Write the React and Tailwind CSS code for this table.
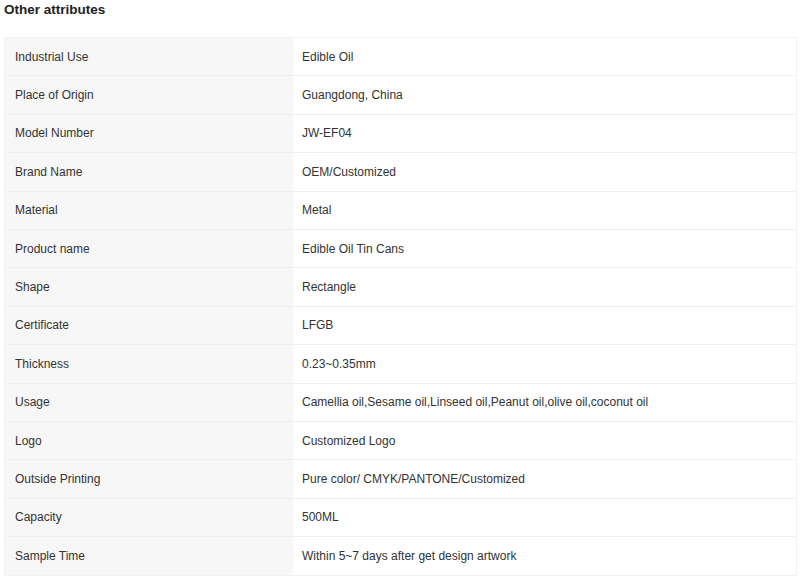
import React from "react";

const attributes = [
  ["Industrial Use", "Edible Oil"],
  ["Place of Origin", "Guangdong, China"],
  ["Model Number", "JW-EF04"],
  ["Brand Name", "OEM/Customized"],
  ["Material", "Metal"],
  ["Product name", "Edible Oil Tin Cans"],
  ["Shape", "Rectangle"],
  ["Certificate", "LFGB"],
  ["Thickness", "0.23~0.35mm"],
  ["Usage", "Camellia oil,Sesame oil,Linseed oil,Peanut oil,olive oil,coconut oil"],
  ["Logo", "Customized Logo"],
  ["Outside Printing", "Pure color/ CMYK/PANTONE/Customized"],
  ["Capacity", "500ML"],
  ["Sample Time", "Within 5~7 days after get design artwork"],
];

const App = () => {
  return (
    <div className="w-[800px] h-[582px] bg-white overflow-hidden font-['Liberation_Sans',Arial,sans-serif]">
      {/* Title */}
      <h2 className="pl-[4px] h-[37px] text-[13.5px] font-bold text-[#222] leading-[20px]">
        Other attributes
      </h2>

      {/* Attribute table */}
      <div className="ml-[4px] w-[793px] border border-[#f2f2f2]">
        {attributes.map(([label, value], i) => (
          <div
            key={i}
            className="flex h-[38.4px] border-b border-[#f0f0f0] last:border-b-0 text-[12px] text-[#333]"
          >
            <div className="w-[288px] shrink-0 bg-[#f7f7f7] flex items-center pl-[10px]">
              {label}
            </div>
            <div className="flex-1 flex items-center pl-[9px]">{value}</div>
          </div>
        ))}
      </div>
    </div>
  );
};

export default App;
